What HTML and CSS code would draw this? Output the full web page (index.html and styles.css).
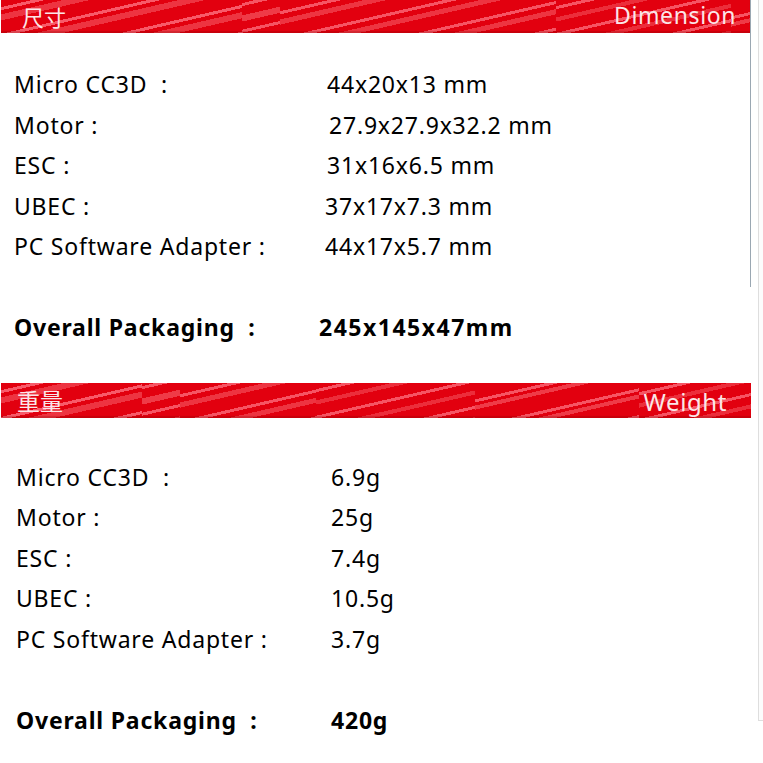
FILE: index.html
```html
<!DOCTYPE html>
<html lang="en">
<head>
<meta charset="utf-8">
<title>Dimension / Weight</title>
<link rel="stylesheet" href="styles.css">
</head>
<body>
<div class="page">
  <main class="main">
    <div class="framed">
      <div class="banner banner-top">
        <span class="cn">尺寸</span>
        <span class="en">Dimension</span>
      </div>
      <div class="rows rows-dim">
        <div class="row"><span class="label">Micro CC3D &nbsp;:</span><span class="val">44x20x13 mm</span></div>
        <div class="row"><span class="label">Motor :</span><span class="val v2">27.9x27.9x32.2 mm</span></div>
        <div class="row"><span class="label">ESC :</span><span class="val">31x16x6.5 mm</span></div>
        <div class="row"><span class="label">UBEC :</span><span class="val v-2">37x17x7.3 mm</span></div>
        <div class="row"><span class="label">PC Software Adapter :</span><span class="val v-2">44x17x5.7 mm</span></div>
      </div>
    </div>
    <div class="rows rows-dim-total">
      <div class="row total"><span class="label">Overall Packaging &nbsp;:</span><span class="val vb">245x145x47mm</span></div>
    </div>

    <div class="banner banner-w">
      <span class="cn">重量</span>
      <span class="en">Weight</span>
    </div>
    <div class="rows rows-w">
      <div class="row"><span class="label">Micro CC3D &nbsp;:</span><span class="val">6.9g</span></div>
      <div class="row"><span class="label">Motor :</span><span class="val">25g</span></div>
      <div class="row"><span class="label">ESC :</span><span class="val">7.4g</span></div>
      <div class="row"><span class="label">UBEC :</span><span class="val">10.5g</span></div>
      <div class="row"><span class="label">PC Software Adapter :</span><span class="val">3.7g</span></div>
      <div class="row blank"></div>
      <div class="row total"><span class="label">Overall Packaging &nbsp;:</span><span class="val">420g</span></div>
    </div>
  </main>
  <div class="side"></div>
</div>
</body>
</html>
```

FILE: styles.css
```css
html, body {
  margin: 0;
  padding: 0;
  background: #fff;
}

body {
  font-family: "Noto Sans", "Open Sans", "Liberation Sans", sans-serif;
  color: #000;
}

.page {
  display: flex;
  width: 763px;
  height: 763px;
  overflow: hidden;
}

.main {
  width: 751px;
  flex: none;
}

.framed {
  border-right: 1px solid #9aa7b2;
  height: 287px;
}

.side {
  flex: 1;
  margin-left: 7px;
  height: 720px;
  border-left: 1px solid #dedede;
  border-bottom: 1px solid #dedede;
  background: #fcfcfc;
}

/* red banners with diagonal stripes */
.banner {
  display: flex;
  justify-content: space-between;
  align-items: center;
  margin-left: 1px;
  color: #fbe6e8;
  background-color: #e2000f;
  background-image:
    repeating-linear-gradient(167deg, rgba(255,255,255,0) 0 7px, rgba(255,120,135,0.75) 7px 10px, rgba(255,255,255,0) 10px 14px, rgba(255,130,140,0.4) 14px 20px, rgba(255,255,255,0) 20px 26px),
    repeating-linear-gradient(167deg, rgba(255,255,255,0) 0 3px, rgba(255,120,135,0.7) 3px 6px, rgba(255,255,255,0) 6px 15px, rgba(255,130,140,0.45) 15px 21px, rgba(255,255,255,0) 21px 26px),
    repeating-linear-gradient(167deg, rgba(255,255,255,0) 0 11px, rgba(255,120,135,0.7) 11px 14px, rgba(255,255,255,0) 14px 19px, rgba(255,130,140,0.4) 19px 24px, rgba(255,255,255,0) 24px 26px),
    repeating-linear-gradient(167deg, rgba(255,255,255,0) 0 6px, rgba(255,120,135,0.7) 6px 9px, rgba(255,255,255,0) 9px 17px, rgba(255,130,140,0.35) 17px 21px, rgba(255,255,255,0) 21px 26px),
    repeating-linear-gradient(167deg, rgba(255,255,255,0) 0 16px, rgba(255,120,135,0.7) 16px 19px, rgba(255,255,255,0) 19px 22px, rgba(255,130,140,0.45) 22px 26px),
    repeating-linear-gradient(167deg, rgba(255,255,255,0) 0 9px, rgba(255,120,135,0.7) 9px 12px, rgba(255,255,255,0) 12px 20px, rgba(255,130,140,0.35) 20px 24px, rgba(255,255,255,0) 24px 26px);
  background-repeat: no-repeat;
  box-shadow: inset 0 -2px 1px rgba(120,0,0,0.25);
}

.banner-top {
  width: 749px;
  height: 33px;
  padding: 0 14px 0 21px;
  box-sizing: border-box;
  background-size: 241px 100%, 38px 100%, 276px 100%, 175px 100%, 20px 100%, 200px 100%;
  background-position: 0 0, 241px 0, 279px 0, 555px 0, 730px 0, 750px 0;
}

.banner-w {
  width: 750px;
  height: 35px;
  padding: 0 24px 0 16px;
  box-sizing: border-box;
  background-size: 141px 100%, 38px 100%, 136px 100%, 159px 100%, 164px 100%, 112px 100%;
  background-position: 0 0, 141px 0, 179px 0, 315px 0, 474px 0, 638px 0;
}

.banner .cn {
  font-family: "Noto Sans CJK SC", sans-serif;
  font-size: 22px;
  line-height: 1;
}

.banner-top .cn { margin-top: -2px; }
.banner-w .cn { margin-top: 0; font-size: 23px; }

.banner .en {
  font-size: 23px;
  line-height: 1;
  letter-spacing: 0.6px;
  margin-top: -2px;
}

.banner-w .en { margin-top: 4px; font-size: 24px; }

/* rows */
.rows {
  display: flex;
  flex-direction: column;
}

.row {
  display: grid;
  grid-template-columns: 313px 1fr;
  height: 40.5px;
  align-items: center;
  font-size: 23px;
  letter-spacing: 0.8px;
  white-space: nowrap;
}

.rows-dim {
  padding-top: 31px;
  padding-left: 14px;
}

.rows-dim-total {
  padding-top: 20px;
  padding-left: 14px;
}

.rows-dim-total .row {
  grid-template-columns: 305px 1fr;
}

.rows-dim-total + .banner {
  margin-top: 35px;
}

.rows-w {
  padding-top: 39px;
  padding-left: 16px;
}

.rows-w .row {
  grid-template-columns: 315px 1fr;
}

.val.v2 { margin-left: 2px; }
.val.v-2 { margin-left: -2px; }

.total {
  font-weight: 700;
  letter-spacing: 0.8px;
}

.total .vb {
  letter-spacing: 1.5px;
}
```
